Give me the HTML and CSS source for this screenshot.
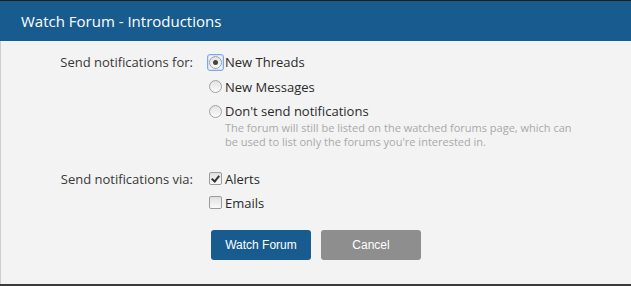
FILE: index.html
```html
<!DOCTYPE html>
<html>
<head>
<meta charset="utf-8">
<title>Watch Forum - Introductions</title>
<link rel="stylesheet" href="styles.css">
</head>
<body>
<div class="dialog">
  <h2 class="dialog-title">Watch Forum - Introductions</h2>
  <div class="dialog-body">
    <div class="form-row">
      <div class="row-label">Send notifications for:</div>
      <ul class="options">
        <li class="option"><span class="radio checked focused"></span><span>New Threads</span></li>
        <li class="option"><span class="radio"></span><span>New Messages</span></li>
        <li class="option"><span class="radio"></span><span>Don't send notifications</span></li>
        <li class="hint">The forum will still be listed on the watched forums page, which can be used to list only the forums you're interested in.</li>
      </ul>
    </div>
    <div class="form-row via">
      <div class="row-label">Send notifications via:</div>
      <ul class="options">
        <li class="option"><span class="checkbox checked"></span><span>Alerts</span></li>
        <li class="option"><span class="checkbox"></span><span>Emails</span></li>
      </ul>
    </div>
    <div class="buttons">
      <button class="btn primary">Watch Forum</button>
      <button class="btn secondary">Cancel</button>
    </div>
  </div>
</div>
</body>
</html>
```
FILE: styles.css
```css
html, body {
  margin: 0;
  padding: 0;
}
body {
  background: #3a3a3a;
  width: 631px;
  height: 286px;
  overflow: hidden;
  border-top: 1px solid #1e1e1e;
  box-sizing: border-box;
  font-family: "Open Sans", "Noto Sans", sans-serif;
}
.dialog {
  height: 283px;
  background: #f3f3f3;
  box-shadow: inset 1px 0 0 rgba(0,0,0,0.15);
}
.dialog-title {
  margin: 0;
  height: 40px;
  line-height: 40px;
  padding-left: 21px;
  background: #185c8f;
  color: #fff;
  font-size: 15px;
  font-weight: normal;
}
.dialog-body {
  padding-top: 12px;
}
.form-row {
  display: grid;
  grid-template-columns: 193px 1fr;
  column-gap: 15px;
}
.form-row.via {
  margin-top: 20px;
}
.row-label {
  text-align: right;
  font-size: 13px;
  line-height: 18px;
  color: #383838;
}
.options {
  list-style: none;
  margin: 0;
  padding: 0;
  display: flex;
  flex-direction: column;
  gap: 6.5px;
}
.via .options {
  gap: 6px;
}
.option {
  display: flex;
  align-items: center;
  gap: 3px;
  font-size: 13px;
  line-height: 18px;
  color: #2a2a2a;
}
.hint {
  margin-top: -6px;
  padding-left: 17px;
  width: 362px;
  font-size: 11px;
  line-height: 14.5px;
  color: #a9a9a9;
}
.radio {
  position: relative;
  width: 11px;
  height: 11px;
  margin-left: 1px;
  border: 1px solid #a2a2a2;
  border-radius: 50%;
  background: linear-gradient(#e2e2e2, #fbfbfb);
  flex: none;
}
.radio.checked::after {
  content: "";
  position: absolute;
  left: 3px;
  top: 3px;
  width: 5px;
  height: 5px;
  border-radius: 50%;
  background: #444;
}
.radio.focused::before {
  content: "";
  position: absolute;
  left: -3px;
  top: -3px;
  width: 15px;
  height: 15px;
  border: 1px solid #7fa7e6;
  border-radius: 3px;
  box-shadow: inset 0 0 0 1px #cfdff7;
}
.checkbox {
  position: relative;
  width: 11px;
  height: 11px;
  margin-left: 1px;
  border: 1px solid #9b9b9b;
  border-radius: 2px;
  background: linear-gradient(#e0e0e0, #fafafa);
  flex: none;
}
.checkbox.checked::after {
  content: "";
  position: absolute;
  left: 3px;
  top: 0.5px;
  width: 3px;
  height: 6px;
  border: solid #333;
  border-width: 0 2px 2px 0;
  transform: rotate(40deg);
}
.buttons {
  display: flex;
  gap: 10px;
  margin: 18px 0 0 211px;
}
.btn {
  width: 100px;
  height: 30px;
  border: none;
  border-radius: 3px;
  color: #fff;
  font-family: "Liberation Sans", Arial, sans-serif;
  font-size: 12px;
  padding: 0;
}
.btn.primary {
  background: #185c8f;
}
.btn.secondary {
  background: #8e8e8e;
}
```
